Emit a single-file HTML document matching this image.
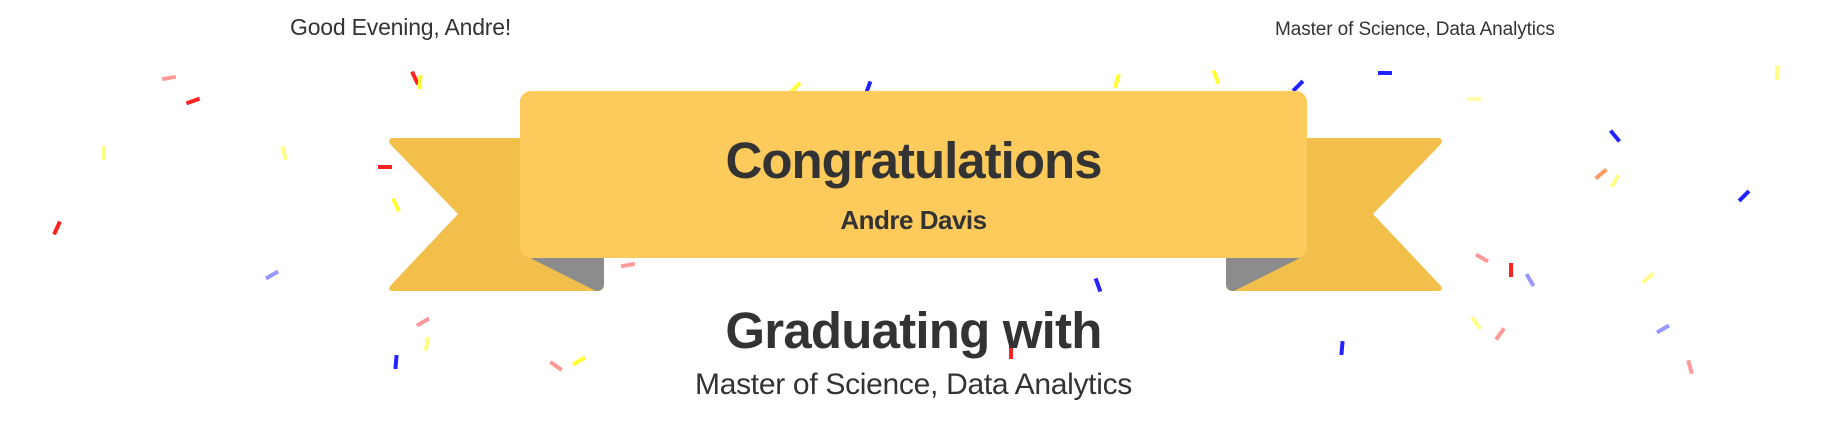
<!DOCTYPE html>
<html><head><meta charset="utf-8"><style>
html,body{margin:0;padding:0;background:#fff;width:1840px;height:429px;overflow:hidden;position:relative;font-family:"Liberation Sans",Arial,sans-serif;color:#333}
.c{position:absolute;width:4px;height:14px}
.t{position:absolute;white-space:nowrap}
</style></head><body>
<div class="t" style="left:290px;top:14px;font-size:23px;letter-spacing:-0.2px">Good Evening, Andre!</div>
<div class="t" style="left:1275px;top:19px;font-size:19px;letter-spacing:-0.1px">Master of Science, Data Analytics</div>

<div class="c" style="left:167px;top:71px;background:#f99;transform:rotate(80deg)"></div>
<div class="c" style="left:191px;top:94px;background:#f22;transform:rotate(70deg)"></div>
<div class="c" style="left:413px;top:71px;background:#f22;transform:rotate(-25deg)"></div>
<div class="c" style="left:418px;top:75px;background:#ff3;transform:rotate(5deg)"></div>
<div class="c" style="left:102px;top:146px;background:#ff8"></div>
<div class="c" style="left:282px;top:146px;background:#ff8;transform:rotate(-15deg)"></div>
<div class="c" style="left:383px;top:160px;background:#f22;transform:rotate(90deg)"></div>
<div class="c" style="left:394px;top:198px;background:#ff3;transform:rotate(-25deg)"></div>
<div class="c" style="left:55px;top:221px;background:#f22;transform:rotate(25deg)"></div>
<div class="c" style="left:270px;top:268px;background:#99f;transform:rotate(60deg)"></div>
<div class="c" style="left:793px;top:81px;background:#ff3;transform:rotate(45deg)"></div>
<div class="c" style="left:866px;top:81px;background:#22f;transform:rotate(20deg)"></div>
<div class="c" style="left:1115px;top:74px;background:#ff3;transform:rotate(15deg)"></div>
<div class="c" style="left:1214px;top:70px;background:#ff3;transform:rotate(-20deg)"></div>
<div class="c" style="left:1296px;top:79px;background:#22f;transform:rotate(45deg)"></div>
<div class="c" style="left:1383px;top:66px;background:#22f;transform:rotate(90deg)"></div>
<div class="c" style="left:1472px;top:92px;background:#ffa;transform:rotate(90deg)"></div>
<div class="c" style="left:1613px;top:129px;background:#22f;transform:rotate(-40deg)"></div>
<div class="c" style="left:1599px;top:167px;background:#f96;transform:rotate(50deg)"></div>
<div class="c" style="left:1613px;top:174px;background:#ff8;transform:rotate(30deg)"></div>
<div class="c" style="left:1742px;top:189px;background:#22f;transform:rotate(45deg)"></div>
<div class="c" style="left:1480px;top:251px;background:#f99;transform:rotate(-60deg)"></div>
<div class="c" style="left:1509px;top:263px;background:#f22"></div>
<div class="c" style="left:1528px;top:273px;background:#99f;transform:rotate(-30deg)"></div>
<div class="c" style="left:1646px;top:271px;background:#ff8;transform:rotate(50deg)"></div>
<div class="c" style="left:626px;top:258px;background:#f99;transform:rotate(80deg)"></div>
<div class="c" style="left:1096px;top:278px;background:#22f;transform:rotate(-20deg)"></div>
<div class="c" style="left:421px;top:315px;background:#f99;transform:rotate(60deg)"></div>
<div class="c" style="left:425px;top:337px;background:#ff8;transform:rotate(10deg)"></div>
<div class="c" style="left:394px;top:355px;background:#22f;transform:rotate(5deg)"></div>
<div class="c" style="left:554px;top:359px;background:#f99;transform:rotate(-55deg)"></div>
<div class="c" style="left:577px;top:354px;background:#ff3;transform:rotate(60deg)"></div>
<div class="c" style="left:1009px;top:345px;background:#f22"></div>
<div class="c" style="left:1340px;top:341px;background:#22f;transform:rotate(5deg)"></div>
<div class="c" style="left:1474px;top:316px;background:#ff8;transform:rotate(-35deg)"></div>
<div class="c" style="left:1498px;top:327px;background:#f99;transform:rotate(35deg)"></div>
<div class="c" style="left:1661px;top:322px;background:#99f;transform:rotate(60deg)"></div>
<div class="c" style="left:1688px;top:360px;background:#f99;transform:rotate(-15deg)"></div>
<div class="c" style="left:1775px;top:66px;background:#ff8"></div>

<svg width="1840" height="429" style="position:absolute;left:0;top:0">
  <path d="M394 138 H604 V284 Q604 291 597 291 H394 Q386 291 391 285 L458 214 L391 145 Q386 138 394 138Z" fill="#f2bf4b"/>
  <path d="M530 258 H604 V284 Q604 291 596 291 Z" fill="#8c8c8c"/>
  <path d="M1437 138 H1226 V284 Q1226 291 1233 291 H1437 Q1445 291 1440 285 L1373 214 L1440 145 Q1445 138 1437 138Z" fill="#f2bf4b"/>
  <path d="M1300 258 H1226 V284 Q1226 291 1234 291 Z" fill="#8c8c8c"/>
  <rect x="520" y="91" width="787" height="167" rx="11" fill="#fdca5c"/>
</svg>

<div class="t" style="left:520px;width:787px;text-align:center;top:131px;font-size:51px;font-weight:bold;letter-spacing:-1px">Congratulations</div>
<div class="t" style="left:520px;width:787px;text-align:center;top:205px;font-size:26px;font-weight:bold;letter-spacing:-0.5px">Andre Davis</div>
<div class="t" style="left:520px;width:787px;text-align:center;top:301px;font-size:51px;font-weight:bold;letter-spacing:-0.8px">Graduating with</div>
<div class="t" style="left:520px;width:787px;text-align:center;top:368px;font-size:30px;letter-spacing:-0.3px">Master of Science, Data Analytics</div>
</body></html>
